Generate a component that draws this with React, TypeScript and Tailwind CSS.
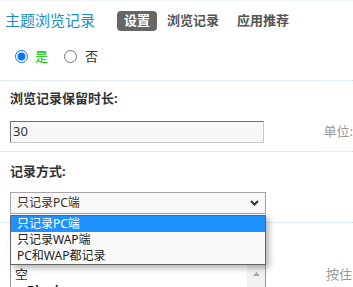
function Divider() {
  return (
    <div className="flex h-px">
      <div className="w-[322px] bg-[#e1ecf6]" />
      <div className="flex-1 border-t border-dotted border-[#cfdcea]" />
    </div>
  );
}

const options = ["只记录PC端", "只记录WAP端", "PC和WAP都记录"];

export default function App() {
  return (
    <div className="relative w-[353px] h-[287px] overflow-hidden bg-white border-t border-[#eef4fa] text-[13px] text-[#333] font-['Noto_Sans','Noto_Sans_CJK_SC',sans-serif]">
      {/* header */}
      <div className="flex items-center h-[39px] pl-[5px]">
        <span className="text-[15px] leading-none text-[#1a8cc8]">主题浏览记录</span>
        <span className="ml-[22px] h-[20px] px-[7px] flex items-center rounded-[4px] bg-[#666] text-white font-bold">设置</span>
        <span className="ml-[10px] font-bold text-[#555]">浏览记录</span>
        <span className="ml-[18px] font-bold text-[#555]">应用推荐</span>
      </div>

      {/* switch */}
      <div className="h-[40px] flex items-center pb-[7px] pl-[15px]">
        <input type="radio" name="on" defaultChecked className="m-0 w-[13px] h-[13px]" />
        <span className="ml-[7px] leading-none text-[#00c800]">是</span>
        <input type="radio" name="on" className="ml-[16px] m-0 w-[13px] h-[13px]" />
        <span className="ml-[8px] leading-none">否</span>
      </div>
      <Divider />

      {/* retention */}
      <div className="pl-[10px] pt-[9px] pb-[8px]">
        <div className="leading-[16px] font-bold">浏览记录保留时长:</div>
        <div className="mt-[15px] flex items-center">
          <div className="w-[256px] h-[22px] flex items-center pl-[2px] border border-t-[#707070] border-l-[#707070] border-r-[#c8c8c8] border-b-[#c8c8c8] bg-[#f7f7f7]">
            30
          </div>
          <span className="ml-[60px] text-[#999] whitespace-nowrap">单位:</span>
        </div>
      </div>
      <Divider />

      {/* mode */}
      <div className="pl-[10px] pt-[11px] pb-[8px]">
        <div className="leading-[16px] font-bold">记录方式:</div>
        <div className="mt-[13px] w-[256px] h-[22px] flex items-center justify-between pl-[6px] pr-[6px] border border-[#a6a6a6] bg-[#f8f8f8] text-[12px]">
          <span>只记录PC端</span>
          <svg width="9" height="6" viewBox="0 0 9 6">
            <polyline points="1,1 4.5,4.5 8,1" fill="none" stroke="#333" strokeWidth="2" />
          </svg>
        </div>
      </div>
      <Divider />

      {/* list */}
      <div className="pl-[10px] pt-[40px] flex">
        <div className="w-[256px] h-[80px] flex border border-[#999] bg-white">
          <div className="flex-1 pl-[4px] pt-[2px] leading-[16px]">
            <div>空</div>
            <div className="pl-[12px] font-bold text-black">Pinyin</div>
          </div>
          <div className="w-[18px] bg-[#f1f1f1] flex justify-center pt-[8px]">
            <svg width="7" height="4" viewBox="0 0 7 4">
              <polygon points="0,4 3.5,0 7,4" fill="#a3a3a3" />
            </svg>
          </div>
        </div>
        <span className="ml-[60px] mt-[3px] leading-[16px] text-[#999] whitespace-nowrap">按住</span>
      </div>

      {/* open dropdown */}
      <div className="absolute left-[10px] top-[214px] w-[256px] border border-[#666] bg-[#fafafa] text-[12px] shadow-[3px_3px_6px_rgba(0,0,0,0.3)]">
        {options.map((o, i) => (
          <div
            key={o}
            className={`h-[16px] leading-[16px] pl-[6px] ${i === 0 ? "bg-[#1e90ff] text-white" : "text-[#222]"}`}
          >
            {o}
          </div>
        ))}
      </div>
    </div>
  );
}
